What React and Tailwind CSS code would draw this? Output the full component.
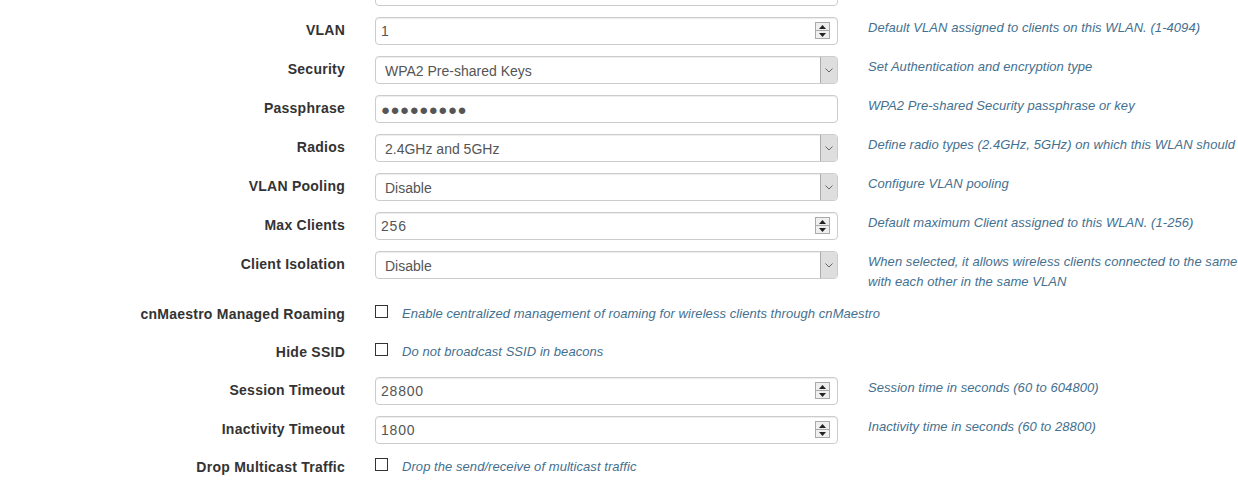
import React from "react";

const LABEL = "w-[345px] shrink-0 text-right font-bold text-[14px] text-[#333333] tracking-[0.25px]";
const HELP = "ml-[30px] pt-[1px] italic text-[13px] leading-[20px] text-[#44708f] whitespace-nowrap tracking-[0.06px]";

function Spinner() {
  return (
    <div className="absolute right-[7px] top-[4px] w-[15px] h-[17px] border border-[#a9a9a9] bg-[#efefef] flex flex-col">
      <div className="flex-1 flex items-center justify-center border-b border-[#a9a9a9]">
        <svg width="7" height="4" viewBox="0 0 7 4"><path d="M0 4 L3.5 0 L7 4 Z" fill="#222" /></svg>
      </div>
      <div className="flex-1 flex items-center justify-center">
        <svg width="7" height="4" viewBox="0 0 7 4"><path d="M0 0 L3.5 4 L7 0 Z" fill="#222" /></svg>
      </div>
    </div>
  );
}

function NumberInput({ value }) {
  return (
    <div className="relative w-[463px] h-[28px] border border-[#cccccc] rounded-[4px] bg-white shadow-[inset_0_1px_1px_rgba(0,0,0,0.075)] flex items-center pl-[5px] pt-[1px]">
      <span className="text-[14px] text-[#555555] tracking-[0.8px]">{value}</span>
      <Spinner />
    </div>
  );
}

function TextInput({ children }) {
  return (
    <div className="relative w-[463px] h-[28px] border border-[#cccccc] rounded-[4px] bg-white shadow-[inset_0_1px_1px_rgba(0,0,0,0.075)] flex items-center pl-[5px]">
      {children}
    </div>
  );
}

function Select({ value }) {
  return (
    <div className="relative w-[463px] h-[28px] border border-[#cccccc] rounded-[4px] bg-white shadow-[inset_0_1px_1px_rgba(0,0,0,0.075)] flex items-center pl-[9px] pt-[2px]">
      <span className="text-[14px] text-[#555555]">{value}</span>
      <div className="absolute right-0 top-0 bottom-0 w-[17px] border-l border-[#ababab] bg-[#dedede] rounded-r-[3px] flex items-center justify-center">
        <svg width="8" height="5" viewBox="0 0 8 5"><path d="M0.5 0.5 L4 4 L7.5 0.5" fill="none" stroke="#666" strokeWidth="1" /></svg>
      </div>
    </div>
  );
}

function FieldRow({ label, control, help, className = "" }) {
  return (
    <div className={"flex items-start " + className}>
      <div className={LABEL + " leading-[26px]"}>{label}</div>
      <div className="ml-[30px] shrink-0">{control}</div>
      <div className={HELP}>{help}</div>
    </div>
  );
}

function CheckRow({ label, help, className = "" }) {
  return (
    <div className={"flex items-center h-[20px] " + className}>
      <div className={LABEL + " leading-[20px] pt-[1px]"}>{label}</div>
      <div className="ml-[30px] w-[13px] h-[13px] border border-[#333333] bg-white shrink-0 -mt-[3px]" />
      <div className="ml-[14px] pt-[1px] italic text-[13px] leading-[20px] text-[#44708f] whitespace-nowrap tracking-[0.06px]">{help}</div>
    </div>
  );
}

export default function App() {
  return (
    <div className="w-[1238px] h-[488px] bg-white overflow-hidden font-['Liberation_Sans',Arial,sans-serif]">
      <div className="flex items-start -mt-[22px]">
        <div className="w-[345px] shrink-0" />
        <div className="ml-[30px] w-[463px] h-[28px] border border-[#cccccc] rounded-[4px] bg-white" />
      </div>
      <FieldRow className="mt-[11px]" label="VLAN" control={<NumberInput value="1" />} help="Default VLAN assigned to clients on this WLAN. (1-4094)" />
      <FieldRow className="mt-[11px]" label="Security" control={<Select value="WPA2 Pre-shared Keys" />} help="Set Authentication and encryption type" />
      <FieldRow
        className="mt-[11px]"
        label="Passphrase"
        control={
          <TextInput>
            <span className="text-[15px] text-[#555555] tracking-[0.5px] leading-none">●●●●●●●●●</span>
          </TextInput>
        }
        help="WPA2 Pre-shared Security passphrase or key"
      />
      <FieldRow className="mt-[11px]" label="Radios" control={<Select value="2.4GHz and 5GHz" />} help="Define radio types (2.4GHz, 5GHz) on which this WLAN should be supported" />
      <FieldRow className="mt-[11px]" label="VLAN Pooling" control={<Select value="Disable" />} help="Configure VLAN pooling" />
      <FieldRow className="mt-[11px]" label="Max Clients" control={<NumberInput value="256" />} help="Default maximum Client assigned to this WLAN. (1-256)" />
      <div className="flex items-start mt-[11px] h-[40px]">
        <div className={LABEL + " leading-[26px]"}>Client Isolation</div>
        <div className="ml-[30px] shrink-0"><Select value="Disable" /></div>
        <div className={HELP}>
          <div>When selected, it allows wireless clients connected to the same AP to communicate</div>
          <div>with each other in the same VLAN</div>
        </div>
      </div>
      <CheckRow className="mt-[12px]" label="cnMaestro Managed Roaming" help="Enable centralized management of roaming for wireless clients through cnMaestro" />
      <CheckRow className="mt-[18px]" label="Hide SSID" help="Do not broadcast SSID in beacons" />
      <FieldRow className="mt-[16px]" label="Session Timeout" control={<NumberInput value="28800" />} help="Session time in seconds (60 to 604800)" />
      <FieldRow className="mt-[11px]" label="Inactivity Timeout" control={<NumberInput value="1800" />} help="Inactivity time in seconds (60 to 28800)" />
      <CheckRow className="mt-[12px]" label="Drop Multicast Traffic" help="Drop the send/receive of multicast traffic" />
    </div>
  );
}
